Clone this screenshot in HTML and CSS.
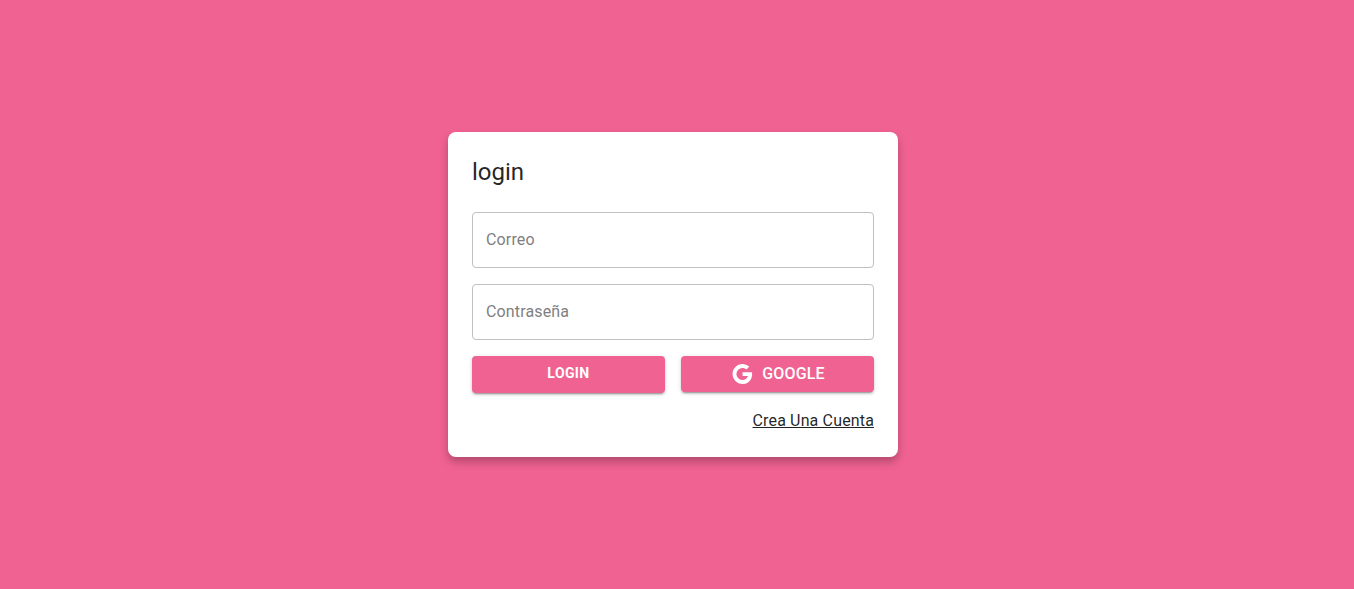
FILE: index.html
```
<!DOCTYPE html>
<html lang="es">
<head>
<meta charset="utf-8">
<title>login</title>
<link rel="stylesheet" href="styles.css">
</head>
<body>
<main class="page">
  <form class="card">
    <h1 class="title">login</h1>
    <input class="field" type="email" placeholder="Correo" aria-label="Correo">
    <input class="field" type="password" placeholder="Contraseña" aria-label="Contraseña">
    <div class="actions">
      <button class="button button-login" type="submit">LOGIN</button>
      <button class="button button-google" type="button">
        <svg class="icon" viewBox="0 0 24 24" aria-hidden="true"><path d="M12.545 10.239v3.821h5.445c-.712 2.315-2.647 3.972-5.445 3.972a6.033 6.033 0 1 1 0-12.064c1.498 0 2.866.549 3.921 1.453l2.814-2.814A9.969 9.969 0 0 0 12.545 2C7.021 2 2.543 6.477 2.543 12s4.478 10 10.002 10c8.396 0 10.249-7.85 9.426-11.748l-9.426-.013z"/></svg>
        <span>GOOGLE</span>
      </button>
    </div>
    <a class="link" href="#">Crea Una Cuenta</a>
  </form>
</main>
</body>
</html>
```
FILE: styles.css
```
* { box-sizing: border-box; }

body {
  margin: 0;
  font-family: Roboto, sans-serif;
  font-size: 16px;
  letter-spacing: 0.00938em;
  color: rgba(0, 0, 0, 0.87);
}

.page {
  min-height: 100vh;
  padding: 32px;
  display: flex;
  align-items: center;
  justify-content: center;
  background: #f06292;
}

.card {
  width: 100%;
  max-width: 450px;
  margin-right: 8px;
  padding: 24px;
  display: flex;
  flex-direction: column;
  gap: 16px;
  background: #fff;
  border-radius: 8px;
  box-shadow: 0 5px 8px rgba(0, 0, 0, 0.25);
}

.title {
  margin: 0 0 8px;
  font-size: 24px;
  font-weight: 400;
  line-height: 32px;
  letter-spacing: 0;
}

.field {
  width: 100%;
  height: 56px;
  padding: 0 13px 2px;
  border: 1px solid #c0c0c0;
  border-radius: 4px;
  background: transparent;
  color: inherit;
  font: inherit;
  letter-spacing: inherit;
}

.field::placeholder { color: #7f7f7f; opacity: 1; }

.actions {
  display: grid;
  grid-template-columns: 1fr 1fr;
  align-items: start;
  gap: 16px;
}

.button {
  height: 36px;
  padding: 0 16px;
  display: flex;
  align-items: center;
  justify-content: center;
  gap: 8px;
  border: 0;
  border-radius: 4px;
  background: #f06292;
  color: #fff;
  font: 500 16px/24px Roboto, sans-serif;
  letter-spacing: 0.00938em;
  box-shadow: 0 3px 1px -2px rgba(0, 0, 0, 0.2), 0 2px 2px rgba(0, 0, 0, 0.14), 0 1px 5px rgba(0, 0, 0, 0.12);
}

.button-login {
  height: 37px;
  padding-bottom: 4px;
  font-size: 14px;
  font-weight: 700;
  letter-spacing: 0.02857em;
}

.icon { width: 24px; height: 24px; fill: currentColor; }

.link {
  align-self: flex-end;
  line-height: 24px;
  color: inherit;
}
```
